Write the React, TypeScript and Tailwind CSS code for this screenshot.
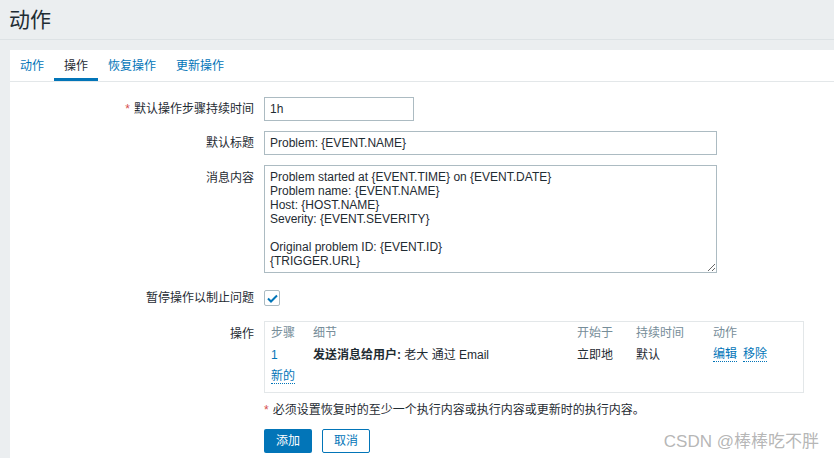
import React from 'react';

const font = { fontFamily: '"Liberation Sans", Arial, "Noto Sans CJK SC", sans-serif' };

const tabs = ['动作', '操作', '恢复操作', '更新操作'];

const Label = ({ children, required }: { children: React.ReactNode; required?: boolean }) => (
  <div className="w-[244px] shrink-0 text-right text-[12px] text-[#1f2c33]">
    {required && <span className="mr-[4px] text-[#d64e4e]">*</span>}
    {children}
  </div>
);

const message = `Problem started at {EVENT.TIME} on {EVENT.DATE}
Problem name: {EVENT.NAME}
Host: {HOST.NAME}
Severity: {EVENT.SEVERITY}

Original problem ID: {EVENT.ID}
{TRIGGER.URL}`;

const App = () => {
  return (
    <div className="relative h-[458px] w-[834px] overflow-hidden bg-[#ebeef0]" style={font}>
      {/* Header */}
      <div className="flex h-[40px] items-center border-b border-[#dde2e5] pl-[9px]">
        <h1 className="text-[21px] leading-none text-[#1f2c33]">动作</h1>
      </div>

      {/* Card */}
      <div className="ml-[10px] mt-[10px] h-[420px] bg-white">
        {/* Tabs */}
        <div className="flex h-[32px] border-b border-[#e3e7e9] text-[12px]">
          {tabs.map((t, i) => (
            <div
              key={t}
              className={
                i === 1
                  ? 'flex h-[31px] items-center border-b-[3px] border-[#0275b8] px-[10px] pt-[3px] text-[#1f2c33]'
                  : 'flex h-[31px] items-center px-[10px] text-[#0275b8]'
              }
            >
              {t}
            </div>
          ))}
        </div>

        {/* Form */}
        <div className="pt-[15px]">
          <div className="flex h-[24px] items-center">
            <Label required>默认操作步骤持续时间</Label>
            <div className="ml-[10px] flex h-[24px] w-[150px] items-center border border-[#acbbc2] px-[5px] text-[12px] text-[#1f2c33]">
              1h
            </div>
          </div>

          <div className="mt-[10px] flex h-[24px] items-center">
            <Label>默认标题</Label>
            <div className="ml-[10px] flex h-[24px] w-[453px] items-center border border-[#acbbc2] px-[5px] text-[12px] text-[#1f2c33]">
              Problem: {'{EVENT.NAME}'}
            </div>
          </div>

          <div className="mt-[10px] flex items-start">
            <div className="pt-[4px]">
              <Label>消息内容</Label>
            </div>
            <textarea
              readOnly
              defaultValue={message}
              className="ml-[10px] h-[108px] w-[453px] resize border border-[#acbbc2] px-[5px] py-[4px] text-[12px] leading-[14px] text-[#1f2c33] outline-none"
              style={font}
            />
          </div>

          <div className="mt-[13px] flex h-[24px] items-center">
            <Label>暂停操作以制止问题</Label>
            <div className="ml-[10px] flex h-[16px] w-[16px] items-center justify-center rounded-[2px] border border-[#acbbc2]">
              <svg width="11" height="9" viewBox="0 0 11 9" fill="none">
                <path d="M1 4.5 L4 7.5 L10 1.5" stroke="#0275b8" strokeWidth="2" />
              </svg>
            </div>
          </div>

          <div className="mt-[11px] flex items-start">
            <div className="pt-[4px]">
              <Label>操作</Label>
            </div>
            <div className="ml-[10px] h-[72px] w-[540px] border border-[#e3e7e9] px-[6px] text-[12px]">
              <div className="flex h-[22px] items-center text-[#768d99]">
                <div className="w-[42px]">步骤</div>
                <div className="w-[264px]">细节</div>
                <div className="w-[59px]">开始于</div>
                <div className="w-[77px]">持续时间</div>
                <div>动作</div>
              </div>
              <div className="flex h-[22px] items-center text-[#1f2c33]">
                <div className="w-[42px] text-[#0275b8]">1</div>
                <div className="w-[264px]">
                  <span className="font-bold">发送消息给用户:</span> 老大 通过 Email
                </div>
                <div className="w-[59px]">立即地</div>
                <div className="w-[77px]">默认</div>
                <div className="flex gap-[6px] text-[#0275b8]">
                  <span className="border-b border-dotted border-[#0275b8] leading-[13px]">编辑</span>
                  <span className="border-b border-dotted border-[#0275b8] leading-[13px]">移除</span>
                </div>
              </div>
              <div className="flex h-[22px] items-center">
                <span className="border-b border-dotted border-[#0275b8] leading-[13px] text-[#0275b8]">新的</span>
              </div>
            </div>
          </div>

          <div className="ml-[254px] mt-[10px] flex h-[14px] items-center text-[12px] text-[#1f2c33]">
            <span className="mr-[4px] text-[#d64e4e]">*</span>必须设置恢复时的至少一个执行内容或执行内容或更新时的执行内容。
          </div>

          <div className="ml-[254px] mt-[12px] flex gap-[10px]">
            <button className="h-[24px] w-[48px] rounded-[2px] bg-[#0275b8] text-[12px] text-white">添加</button>
            <button className="h-[24px] w-[48px] rounded-[2px] border border-[#0275b8] bg-white text-[12px] text-[#0275b8]">取消</button>
          </div>
        </div>
      </div>

      {/* Watermark */}
      <div className="absolute right-[15px] top-[429px] text-[17px] text-[#a3a3a3]/80" style={font}>
        CSDN @棒棒吃不胖
      </div>
    </div>
  );
};

export default App;
